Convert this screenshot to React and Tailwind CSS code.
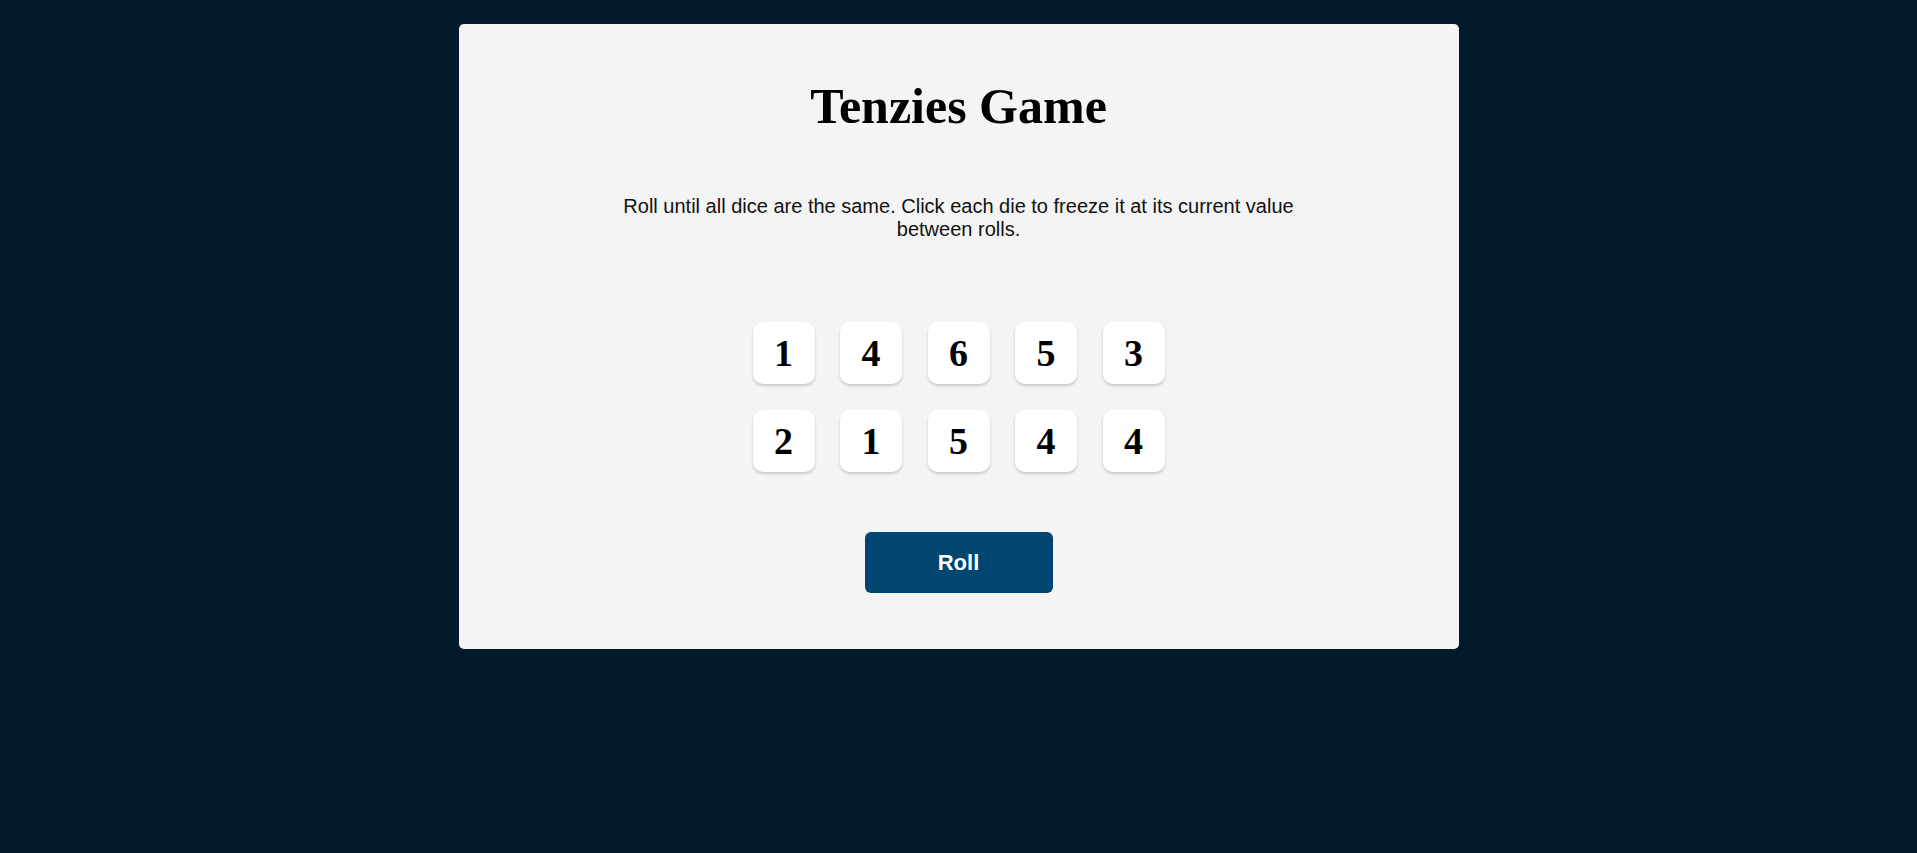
import React, { useState } from "react";

const START = [1, 4, 6, 5, 3, 2, 1, 5, 4, 4];

function Die({ value, held, onClick }) {
  return (
    <button
      type="button"
      onClick={onClick}
      className={`w-[62px] h-[62px] rounded-[10px] flex items-center justify-center shadow-[0_2px_3px_rgba(0,0,0,0.18)] font-['Liberation_Serif',serif] font-bold text-[38px] text-black leading-none ${
        held ? "bg-[#59e391]" : "bg-white"
      }`}
    >
      {value}
    </button>
  );
}

export default function App() {
  const [dice, setDice] = useState(START.map((v) => ({ value: v, held: false })));

  const toggle = (i) =>
    setDice((d) => d.map((die, j) => (j === i ? { ...die, held: !die.held } : die)));

  const roll = () =>
    setDice((d) =>
      d.map((die) => (die.held ? die : { ...die, value: Math.ceil(Math.random() * 6) }))
    );

  return (
    <div className="min-h-screen bg-[#021a2a] pt-[24px]">
      <main className="mx-auto w-[1000px] bg-[#f4f4f4] rounded-[5px] pt-[55px] pb-[56px] flex flex-col items-center">
        <h1 className="font-['Liberation_Serif',serif] font-bold text-[50px] leading-[55px] text-black">
          Tenzies Game
        </h1>
        <p className="mt-[61px] max-w-[700px] text-center font-['Liberation_Sans',Arial,sans-serif] text-[20px] leading-[23px] text-[#111]">
          Roll until all dice are the same. Click each die to freeze it at its current value
          between rolls.
        </p>
        <div className="mt-[81px] grid grid-cols-5 gap-x-[25.5px] gap-y-[26px]">
          {dice.map((die, i) => (
            <Die key={i} value={die.value} held={die.held} onClick={() => toggle(i)} />
          ))}
        </div>
        <button
          type="button"
          onClick={roll}
          className="mt-[60px] w-[188px] h-[61px] rounded-[6px] bg-[#004670] text-white font-['Liberation_Sans',Arial,sans-serif] font-bold text-[22px]"
        >
          Roll
        </button>
      </main>
    </div>
  );
}
